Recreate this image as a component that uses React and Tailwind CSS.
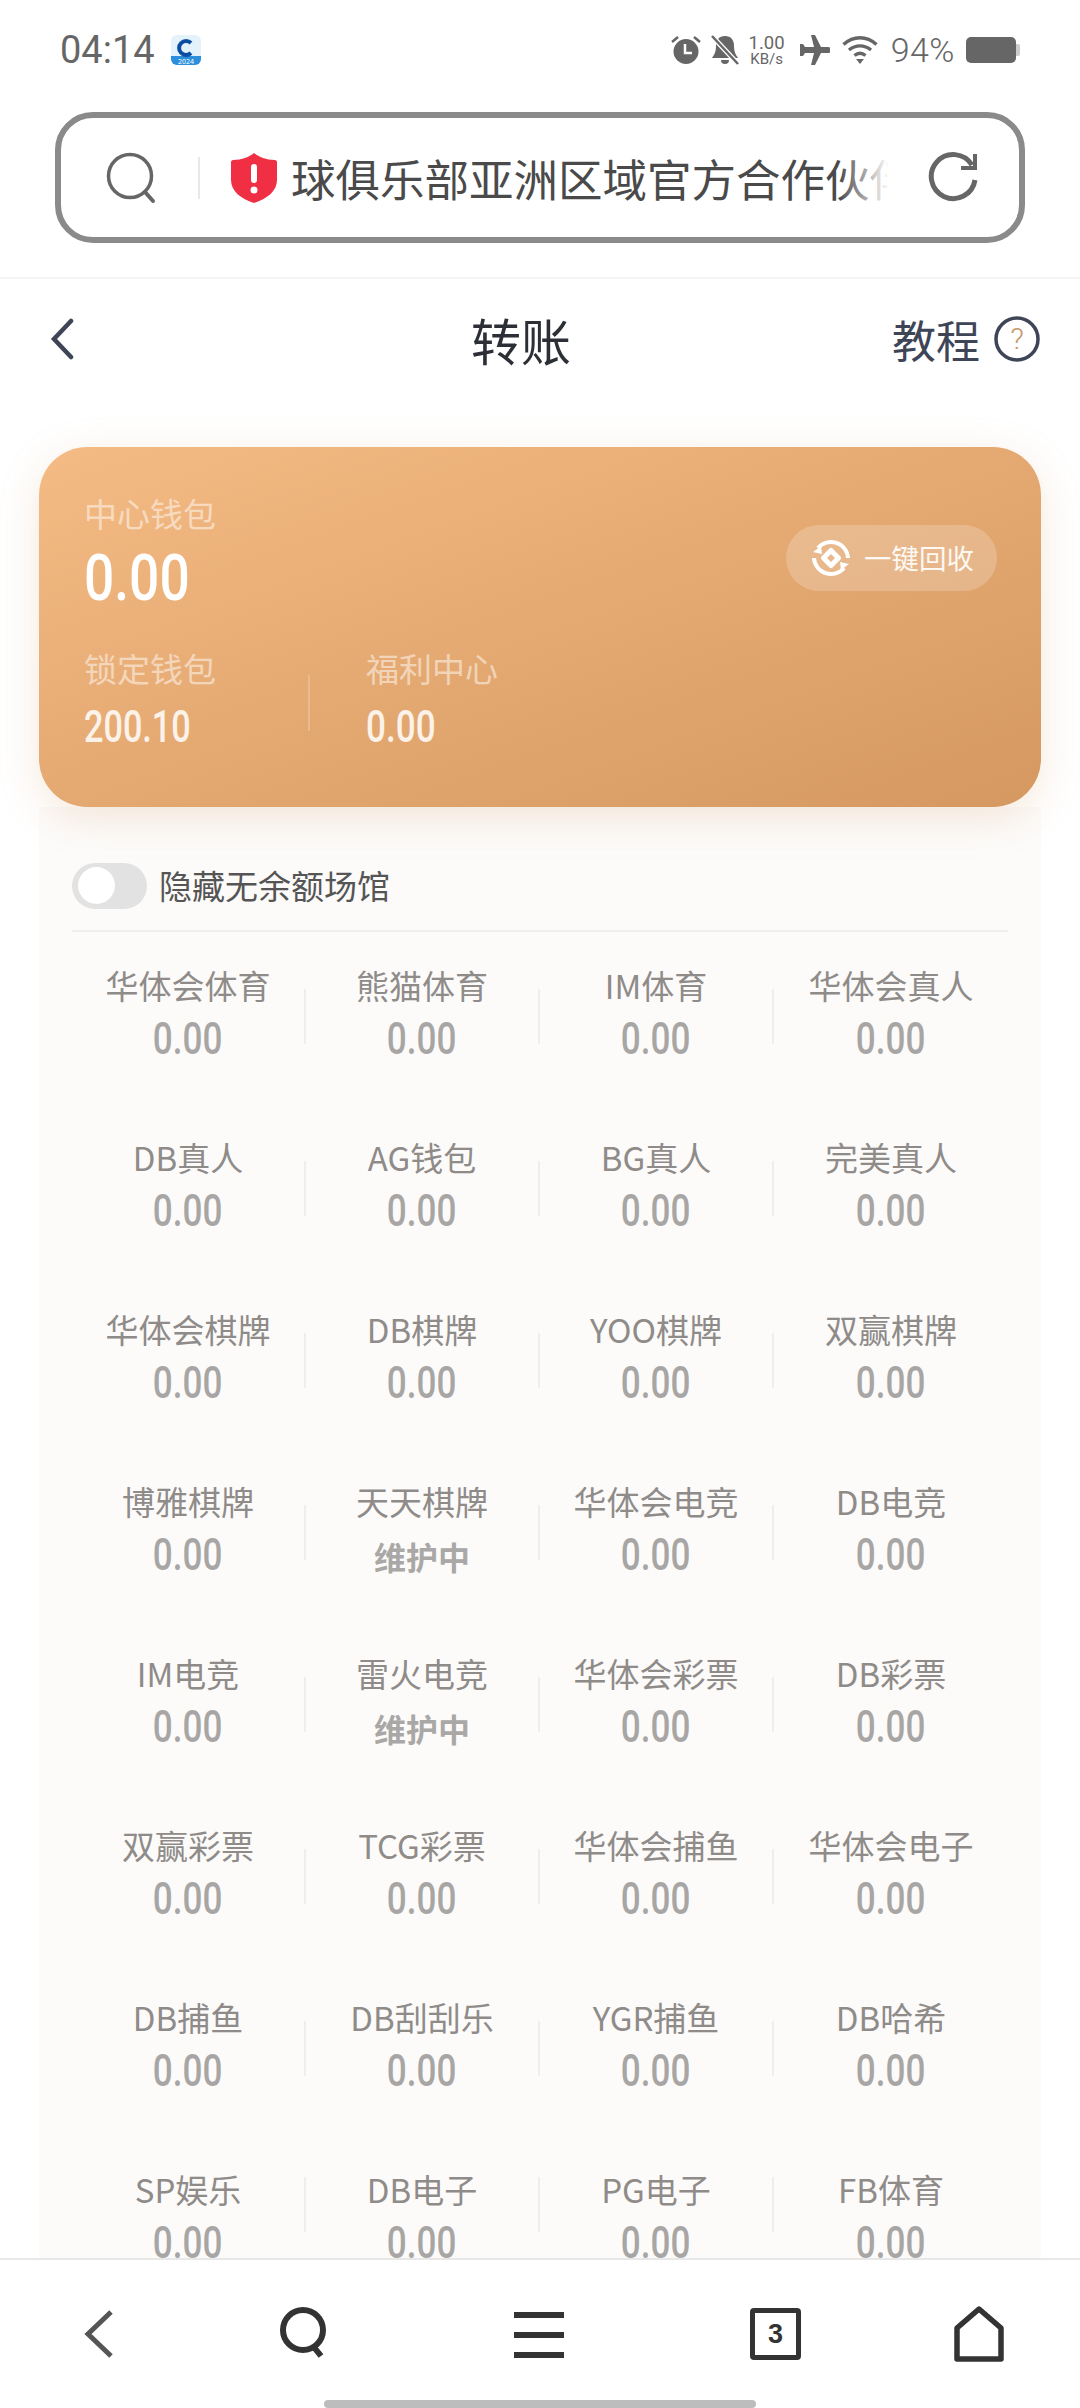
const venues = [
  ["华体会体育", "0.00"], ["熊猫体育", "0.00"], ["IM体育", "0.00"], ["华体会真人", "0.00"],
  ["DB真人", "0.00"], ["AG钱包", "0.00"], ["BG真人", "0.00"], ["完美真人", "0.00"],
  ["华体会棋牌", "0.00"], ["DB棋牌", "0.00"], ["YOO棋牌", "0.00"], ["双赢棋牌", "0.00"],
  ["博雅棋牌", "0.00"], ["天天棋牌", "维护中"], ["华体会电竞", "0.00"], ["DB电竞", "0.00"],
  ["IM电竞", "0.00"], ["雷火电竞", "维护中"], ["华体会彩票", "0.00"], ["DB彩票", "0.00"],
  ["双赢彩票", "0.00"], ["TCG彩票", "0.00"], ["华体会捕鱼", "0.00"], ["华体会电子", "0.00"],
  ["DB捕鱼", "0.00"], ["DB刮刮乐", "0.00"], ["YGR捕鱼", "0.00"], ["DB哈希", "0.00"],
  ["SP娱乐", "0.00"], ["DB电子", "0.00"], ["PG电子", "0.00"], ["FB体育", "0.00"],
];

const cjk = "font-['Noto_Sans_CJK_SC',sans-serif]";
const digits = "font-['Roboto',sans-serif]";

function StatusBar() {
  return (
    <div className="h-[100px] shrink-0 flex items-center pl-[60px] pr-[60px] text-[#666]">
      <span className={`${digits} text-[38px] leading-none`}>04:14</span>
      <svg className="ml-[16px]" width="30" height="30" viewBox="0 0 30 30">
        <rect width="30" height="30" rx="6" fill="#e4f2fc" />
        <path d="M0 21h30v3a6 6 0 0 1-6 6H6a6 6 0 0 1-6-6z" fill="#2b8fdc" />
        <path d="M20 8a7 7 0 1 0 0 10" fill="none" stroke="#0a4ea2" strokeWidth="4" />
        <text x="15" y="29" fontSize="7" fill="#fff" textAnchor="middle">2024</text>
      </svg>
      <div className="ml-auto flex items-center">
        <svg width="30" height="30" viewBox="0 0 30 30" fill="#666">
          <circle cx="15" cy="16.5" r="12.5" />
          <path d="M1 7l6-5M29 7l-6-5" stroke="#666" strokeWidth="2.5" />
          <path d="M14 9v9h7" fill="none" stroke="#fff" strokeWidth="2.5" />
        </svg>
        <svg className="ml-[9px]" width="30" height="30" viewBox="0 0 30 30" fill="#666">
          <path d="M15 1c6 0 9 4 9 10 0 6 2 9 4 12H2c2-3 4-6 4-12C6 5 9 1 15 1zM11 25h8a4 4 0 0 1-8 0z" />
          <path d="M2 1l26 28" stroke="#fff" strokeWidth="5" />
          <path d="M2 1l26 28" stroke="#666" strokeWidth="2.5" />
        </svg>
        <div className={`${digits} ml-[8px] w-[38px] flex flex-col items-center text-[#666]`}>
          <span className="text-[18.500px] leading-[18px]">1.00</span>
          <span className="text-[15px] leading-[14px]">KB/s</span>
        </div>
        <svg className="ml-[13px]" width="31" height="31" viewBox="0 0 31 31" fill="#666">
          <path d="M12 0h4l6 12h7a2.500 2.500 0 0 1 0 6h-7l-6 12h-4l3-12H6l-2 3H1v-12h3l2 3h9z" />
        </svg>
        <svg className="ml-[12px]" width="36" height="30" viewBox="0 0 36 30" fill="none" stroke="#666" strokeWidth="3.400">
          <path d="M1.500 9.500c10-9 23-9 33 0" />
          <path d="M7 15c6.500-5.500 15.500-5.500 22 0" />
          <path d="M12.500 20.500c3.500-3 7.500-3 11 0" />
          <path d="M18 29l-4-5h8z" fill="#666" stroke="none" />
        </svg>
        <span className={`${digits} ml-[13px] text-[34px] leading-none font-light tracking-[0.5px]`}>94%</span>
        <div className="ml-[11px] flex items-center">
          <div className="w-[50px] h-[26px] rounded-[5px] bg-[#666]" />
          <div className="w-[4px] h-[12px] rounded-r-[2px] bg-[#ccc]" />
        </div>
      </div>
    </div>
  );
}

function SearchBar() {
  return (
    <div className="h-[179px] shrink-0 pt-[12px] px-[55px] border-b-2 border-[#f5f5f5]">
      <div className="h-[131px] rounded-[38px] border-[6px] border-[#8a8a8a] flex items-center pl-[44px] pr-[41px]">
        <svg width="52" height="52" viewBox="0 0 52 52" fill="none" stroke="#666" strokeWidth="3.500">
          <circle cx="25" cy="24" r="21.500" />
          <path d="M40 40l8 9" strokeWidth="4" strokeLinecap="round" />
        </svg>
        <div className="ml-[41px] w-[2px] h-[42px] bg-[#e8e8e8]" />
        <svg className="ml-[31px] shrink-0" width="46" height="50" viewBox="0 0 46 50">
          <path d="M23 0c5 4 12 7 21 7 1 0 2 1 2 2v18c0 11-10 19-23 23C10 46 0 38 0 27V9c0-1 1-2 2-2 9 0 16-3 21-7z" fill="#f02e44" />
          <rect x="20" y="11" width="6" height="19" rx="3" fill="#fff" />
          <circle cx="23" cy="37" r="3.500" fill="#fff" />
        </svg>
        <div className="relative ml-[14px] w-[598px] overflow-hidden whitespace-nowrap">
          <span className={`${cjk} text-[44.500px] leading-[60px] text-[#4a4a4a]`}>球俱乐部亚洲区域官方合作伙伴</span>
          <div className="absolute top-0 right-0 w-[50px] h-full bg-gradient-to-r from-white/0 to-white" />
        </div>
        <svg className="ml-auto" width="50" height="52" viewBox="0 0 50 52" fill="none" stroke="#666" strokeWidth="5">
          <path d="M44 13A22 22 0 1 0 47 28" />
          <path d="M47 2v14H33" strokeWidth="4" />
        </svg>
      </div>
    </div>
  );
}

function PageHeader() {
  return (
    <div className="h-[120px] shrink-0 flex items-center pl-[50px] pr-[40px]">
      <svg width="24" height="42" viewBox="0 0 24 42" fill="none" stroke="#3e4557" strokeWidth="4.500" strokeLinecap="round">
        <path d="M21 3L4 21l17 18" />
      </svg>
      <span className={`${cjk} ml-[397px] text-[50px] leading-none text-[#2c2f36]`}>转账</span>
      <div className="ml-auto flex items-center">
        <span className={`${cjk} text-[44px] leading-none text-[#3e4557]`}>教程</span>
        <svg className="ml-[14px]" width="46" height="46" viewBox="0 0 46 46" fill="none">
          <circle cx="23" cy="23" r="21" stroke="#3e4557" strokeWidth="3.500" />
          <text x="23" y="33" fontSize="30" fontWeight="300" textAnchor="middle" fill="#c59a70" stroke="none" fontFamily="Roboto, sans-serif">?</text>
        </svg>
      </div>
    </div>
  );
}

function WalletCard() {
  return (
    <div className="relative z-10 h-[360px] rounded-[48px] bg-gradient-to-br from-[#f5bb84] to-[#d49860] shadow-[0_10px_40px_rgba(214,150,90,0.22)] pl-[45px] pr-[44px] pt-[47px] flex">
      <div className="flex flex-col">
        <span className={`${cjk} text-[33px] leading-[38px] text-white/50`}>中心钱包</span>
        <span className={`${digits} mt-[10px] inline-block origin-left scale-x-[0.82] text-[65px] leading-[72px] font-medium text-white`}>0.00</span>
        <div className="mt-[35px] flex">
          <div className="w-[224px] flex flex-col">
            <span className={`${cjk} text-[33px] leading-[38px] text-white/50`}>锁定钱包</span>
            <span className={`${digits} mt-[15px] inline-block origin-left scale-x-[0.76] text-[45px] leading-[50px] font-medium text-white/85`}>200.10</span>
          </div>
          <div className="w-[2px] h-[56px] mt-[26px] bg-white/20" />
          <div className="ml-[56px] flex flex-col">
            <span className={`${cjk} text-[33px] leading-[38px] text-white/50`}>福利中心</span>
            <span className={`${digits} mt-[15px] inline-block origin-left scale-x-[0.78] text-[45px] leading-[50px] font-medium text-white/85`}>0.00</span>
          </div>
        </div>
      </div>
      <div className="ml-auto mt-[31px] h-[66px] w-[211px] rounded-full bg-white/20 flex items-center pl-[24px]">
        <svg width="42" height="42" viewBox="0 0 42 42" fill="none" stroke="#fff" strokeWidth="4">
          <path d="M8 11A17 17 0 0 1 38 21" />
          <path d="M34 31A17 17 0 0 1 4 21" />
          <path d="M3 15l8-6 1 8zM39 27l-8 6-1-8z" fill="#fff" stroke="none" />
          <path d="M21 13.500l7.500 7.500-7.500 7.500-7.500-7.500z" strokeWidth="5" strokeLinejoin="round" />
        </svg>
        <span className={`${cjk} ml-[12px] text-[27.500px] leading-none text-white/90`}>一键回收</span>
      </div>
    </div>
  );
}

function VenueCell({ name, amount, lastCol, lastRow }) {
  const down = amount === "维护中";
  return (
    <div className="h-[172px] flex">
      <div className="flex-1 flex flex-col items-center">
        <span className={`${cjk} mt-[19px] text-[33px] leading-[50px] text-[#8f8b89] whitespace-nowrap`}>{name}</span>
        {down ? (
          <span className={`${cjk} mt-[8px] text-[32px] leading-[44px] font-bold text-[#aaa8a6]`}>维护中</span>
        ) : (
          <span className={`${digits} mt-[4px] inline-block scale-x-[0.78] text-[45px] leading-[50px] font-medium text-[#a8a6a4]`}>{amount}</span>
        )}
      </div>
      {!lastCol && <div className={`w-[2px] h-[55px] bg-[#efeeed] ${lastRow ? "mt-[32px]" : "mt-[48px]"}`} />}
    </div>
  );
}

export default function App() {
  return (
    <div className="w-[1080px] h-[2408px] bg-white flex flex-col overflow-hidden">
      <StatusBar />
      <SearchBar />
      <PageHeader />
      <main className="flex-1 min-h-0 overflow-hidden px-[39px] pt-[48px]">
        <WalletCard />
        <div className="bg-[#fcfbfa] h-[1500px] px-[33px]">
          <div className="h-[125px] flex items-center border-b-2 border-[#f0efee] pt-[34px]">
            <div className="w-[75px] h-[46px] rounded-full bg-[#e2e2e2] flex items-center pl-[6px]">
              <div className="w-[37px] h-[37px] rounded-full bg-white" />
            </div>
            <span className={`${cjk} ml-[12px] text-[33px] leading-none text-[#555]`}>隐藏无余额场馆</span>
          </div>
          <div className="grid grid-cols-4 mt-[9px]">
            {venues.map(([name, amount], i) => (
              <VenueCell key={name} name={name} amount={amount} lastCol={i % 4 === 3} lastRow={i >= 28} />
            ))}
          </div>
        </div>
      </main>
      <nav className="h-[150px] shrink-0 relative z-20 bg-white border-t-2 border-[#e8e8e8] flex flex-col">
        <div className="flex items-start pl-[84px] pt-[46px]">
          <svg className="mt-[4px]" width="30" height="48" viewBox="0 0 30 48" fill="none" stroke="#555" strokeWidth="5">
            <path d="M27 2L4 24l23 22" />
          </svg>
          <svg className="ml-[166px]" width="48" height="52" viewBox="0 0 48 52" fill="none" stroke="#333" strokeWidth="6">
            <circle cx="23" cy="24" r="20" />
            <path d="M33 40l8 10" />
          </svg>
          <div className="ml-[186px] mt-[6px] w-[50px] h-[46px] flex flex-col justify-between">
            <div className="h-[6px] bg-[#333]" />
            <div className="h-[6px] bg-[#333]" />
            <div className="h-[6px] bg-[#333]" />
          </div>
          <div className="ml-[186px] mt-[2px] w-[51px] h-[52px] rounded-[4px] border-[5px] border-[#333] flex items-center justify-center">
            <span className="font-['Liberation_Sans',sans-serif] text-[27px] font-semibold leading-none text-[#333]">3</span>
          </div>
          <svg className="ml-[153px]" width="50" height="56" viewBox="0 0 50 56" fill="none" stroke="#333" strokeWidth="5.500" strokeLinejoin="round">
            <path d="M25 3L47 22v31H3V22z" />
          </svg>
        </div>
        <div className="mt-auto mx-auto w-[432px] h-[8px] rounded-full bg-[#bdbdbd]" />
      </nav>
    </div>
  );
}
